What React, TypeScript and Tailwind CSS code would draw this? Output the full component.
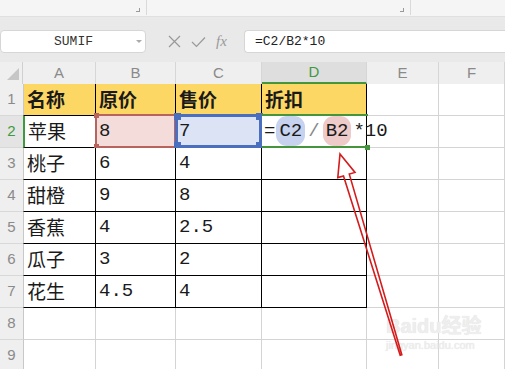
import React from 'react';

const cols = [
  { key: 'A', w: 73 },
  { key: 'B', w: 80 },
  { key: 'C', w: 86 },
  { key: 'D', w: 105 },
  { key: 'E', w: 72 },
  { key: 'F', w: 66 },
];

const data: string[][] = [
  ['名称', '原价', '售价', '折扣'],
  ['苹果', '8', '7', ''],
  ['桃子', '6', '4', ''],
  ['甜橙', '9', '8', ''],
  ['香蕉', '4', '2.5', ''],
  ['瓜子', '3', '2', ''],
  ['花生', '4.5', '4', ''],
];

const cjk = { fontFamily: '"Noto Sans CJK SC", sans-serif' };
const mono = { fontFamily: '"Liberation Mono", "Noto Sans CJK SC", monospace' };
const sans = { fontFamily: '"Liberation Sans", sans-serif' };

// selection frame drawn over the referenced cell
function RefFrame({ color, thick, all }: { color: string; thick: string; all: boolean }) {
  const h = all ? 'w-[7px] h-[7px]' : 'w-[5px] h-[5px]';
  const off = all ? '-[4px]' : '-[3px]';
  return (
    <div className={`absolute -left-px -top-[2px] right-[-1px] bottom-[-1px] ${thick}`} style={{ borderColor: color }}>
      <span className={`absolute -left${off} -top${off} ${h}`} style={{ background: color, left: all ? -4 : -3, top: all ? -4 : -3 }} />
      <span className={`absolute ${h}`} style={{ background: color, left: all ? -4 : -3, bottom: all ? -4 : -3 }} />
      {all && <span className={`absolute ${h}`} style={{ background: color, right: -4, top: -4 }} />}
      {all && <span className={`absolute ${h}`} style={{ background: color, right: -4, bottom: -4 }} />}
    </div>
  );
}

function Cell({ r, c, w }: { r: number; c: number; w: number }) {
  const inTable = r <= 7 && c <= 3;
  const text = inTable ? data[r - 1][c] : '';
  const isHead = r === 1 && inTable;
  const borderColor = inTable ? 'border-black' : 'border-[#d4d4d4]';
  const bg = isHead ? 'bg-[#fdd764]' : r === 2 && c === 1 ? 'bg-[#f4dcdb]' : r === 2 && c === 2 ? 'bg-[#dce3f4]' : 'bg-white';
  const isNum = /^[0-9.]+$/.test(text);
  const leftBorder = c === 0 && r !== 2 ? 'border-l border-l-[#c8c8c8]' : c === 0 && r === 2 ? 'border-l-2 border-l-[#3f9a3f]' : '';
  return (
    <div
      className={`relative h-[32px] border-r border-b ${borderColor} ${bg} ${leftBorder} flex items-center pl-[3px] text-[19px] text-[#1a1a1a] whitespace-nowrap ${isHead ? 'font-bold' : ''}`}
      style={{ width: w, ...(isNum ? mono : cjk) }}
    >
      {text}
      {r === 2 && c === 1 && <RefFrame color="#b8645e" thick="border-2" all={false} />}
      {r === 2 && c === 2 && <RefFrame color="#4b6fbf" thick="border-[3px]" all />}
      {r === 2 && c === 3 && (
        <div
          className="absolute left-0 top-[-2px] bottom-[-1px] right-[-2px] border-t-2 border-b-2 border-[#45953d] z-10 flex items-center text-[19px] text-[#1a1a1a]"
          style={mono}
        >
          <span className="ml-[2px]">=</span>
          <span className="bg-[#c6d2ee] rounded-[11px] px-[3px] py-[1px] ml-[1px]">C2</span>
          <span className="text-[#888] mx-[3px]">/</span>
          <span className="bg-[#eecac9] rounded-[11px] px-[3px] py-[1px]">B2</span>
          <span className="ml-[2px]">*10</span>
          <span className="absolute right-[-2px] bottom-[-4px] w-[5px] h-[5px] bg-[#45953d]" />
        </div>
      )}
    </div>
  );
}

function Corner() {
  return <span className="w-[4px] h-[4px] border-r border-b border-[#999] mr-[6px] mb-[3px]" />;
}

export default function App() {
  return (
    <div className="relative w-[505px] h-[369px] overflow-hidden bg-[#e9e9e9] select-none">
      {/* ribbon remnant */}
      <div className="flex h-[17px] bg-[#f5f5f5] border-b border-[#e0e0e0]">
        <div className="w-[147px] h-[15px] border-r border-[#dadada] flex items-end justify-end">
          <Corner />
        </div>
        <div className="w-[264px] h-[15px] border-r border-[#dadada] flex items-end justify-end">
          <Corner />
        </div>
        <div className="flex-1" />
      </div>

      {/* formula bar */}
      <div className="flex items-center h-[23px] mt-[13px]">
        <div className="w-[146px] h-full bg-white rounded-[4px] border border-[#d6d6d6] flex items-center text-[13px] text-[#333]" style={mono}>
          <span className="flex-1 text-center pl-[10px]">SUMIF</span>
          <span className="w-0 h-0 mr-[3px] border-l-[3px] border-r-[3px] border-t-[3px] border-l-transparent border-r-transparent border-t-[#aaa]" />
        </div>
        <div className="flex items-center w-[98px] pl-[22px] gap-[10px]">
          <svg width="13" height="13" viewBox="0 0 13 13"><path d="M1 1 L12 12 M12 1 L1 12" stroke="#999" strokeWidth="1.2" fill="none" /></svg>
          <svg width="15" height="12" viewBox="0 0 15 12"><path d="M1 6 L5.5 10.5 L14 1.5" stroke="#999" strokeWidth="1.2" fill="none" /></svg>
          <span className="italic text-[15px] leading-none text-[#999]" style={{ fontFamily: '"Liberation Serif", serif' }}>fx</span>
        </div>
        <div className="flex-1 h-full bg-white rounded-l-[4px] border border-r-0 border-[#d6d6d6] flex items-center pl-[10px] text-[13px] text-[#222]" style={mono}>
          =C2/B2*10
        </div>
      </div>

      {/* sheet */}
      <div className="mt-[9px]">
        <div className="flex h-[22px] bg-[#efefef]">
          <div className="w-[23px] h-full border-r border-[#d0d0d0] flex items-end justify-end pr-[3px] pb-[4px]">
            <span className="w-0 h-0 border-l-[12px] border-b-[12px] border-l-transparent border-b-[#c6c6c6]" />
          </div>
          {cols.map((col) => (
            <div
              key={col.key}
              className={`h-full flex items-center justify-center text-[15px] border-r border-[#d6d6d6] ${col.key === 'D' ? 'bg-[#dedede] text-[#3f9a3f] border-b-2 border-b-[#45953d]' : 'text-[#8a8a8a]'}`}
              style={{ width: col.w, ...sans }}
            >
              {col.key}
            </div>
          ))}
        </div>

        {[1, 2, 3, 4, 5, 6, 7, 8, 9].map((r) => (
          <div key={r} className="flex">
            <div
              className={`w-[23px] h-[32px] flex items-center justify-center text-[15px] border-b border-[#d8d8d8] ${r === 2 ? 'text-[#3f9a3f] bg-[#e4e4e4]' : 'text-[#8a8a8a] bg-[#efefef]'}`}
              style={sans}
            >
              {r}
            </div>
            {cols.map((col, c) => (
              <Cell key={col.key} r={r} c={c} w={col.w} />
            ))}
          </div>
        ))}
      </div>

      {/* watermark */}
      <div className="absolute left-[386px] top-[316px] flex flex-col items-start text-[#eeeeee] pointer-events-none" style={{ textShadow: '0 0 1px #dadada' }}>
        <div className="text-[20px] font-bold leading-none" style={{ fontFamily: '"Liberation Sans", "Noto Sans CJK SC", sans-serif' }}>Baidu经验</div>
        <div className="text-[11px] leading-none mt-[4px]" style={sans}>jingyan.baidu.com</div>
      </div>

      {/* red annotation arrow */}
      <svg className="absolute left-0 top-0 pointer-events-none" width="505" height="369" viewBox="0 0 505 369">
        <polygon
          points="340,154 355,172.4 349.3,174.1 401.8,354.8 400.2,355.2 343.5,175.9 337.8,177.6"
          fill="none"
          stroke="#d41c1c"
          strokeWidth="1.6"
        />
      </svg>
    </div>
  );
}
